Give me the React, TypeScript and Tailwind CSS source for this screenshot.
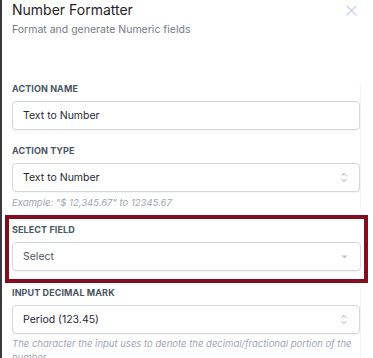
import React from "react";

const font = { fontFamily: "Inter, 'Noto Sans', sans-serif" };

function Label({ children }: { children: React.ReactNode }) {
  return (
    <div className="text-[9px] leading-[12px] font-bold tracking-[0.1px] text-[#4b5563] uppercase">
      {children}
    </div>
  );
}

function Chevrons() {
  return (
    <svg width="6" height="11" viewBox="0 0 6 11" fill="none" stroke="#9ca3af" strokeWidth="1" strokeLinecap="round" strokeLinejoin="round">
      <path d="M1 3.5 L3 1.5 L5 3.5" />
      <path d="M1 7.5 L3 9.5 L5 7.5" />
    </svg>
  );
}

function Caret() {
  return (
    <svg width="7" height="4" viewBox="0 0 7 4">
      <path d="M0.5 0.5 L6.5 0.5 L3.5 3.5 Z" fill="#c0c4cc" />
    </svg>
  );
}

function Field({ text, right, textColor = "text-[#1f2937]" }: { text: string; right?: React.ReactNode; textColor?: string }) {
  return (
    <div className="h-[29px] rounded-[4px] border border-[#d4d7dc] bg-white shadow-[0_1px_1px_rgba(0,0,0,0.04)] flex items-center pl-[10px] pr-[12px]">
      <span className={`flex-1 text-[10.5px] leading-[16px] ${textColor}`}>{text}</span>
      {right}
    </div>
  );
}

export default function App() {
  return (
    <div className="w-[373px] h-[358px] overflow-hidden flex bg-white" style={font}>
      <div className="w-[2px] bg-[#3a3a3a] shrink-0" />
      <div className="flex-1 flex flex-col">
        <div className="relative pl-[10px]">
          <div className="text-[14px] leading-[20px] text-[#1f2328]">Number Formatter</div>
          <div className="mt-[2px] text-[10.5px] leading-[16px] text-[#757b85]">Format and generate Numeric fields</div>
          <svg className="absolute left-[344px] top-[5px]" width="11" height="11" viewBox="0 0 11 11" stroke="#c9d0f7" strokeWidth="1.3" strokeLinecap="round">
            <path d="M1 1 L10 10 M10 1 L1 10" />
          </svg>
        </div>
        <div className="mt-[18px] h-px bg-[#e5e7eb]" />
        <div className="pl-[10px] pr-[12px]">
          <div className="mt-[27px] flex flex-col border-r border-[#f3f4f6] rounded-[4px]">
            <Label>Action Name</Label>
            <div className="mt-[6px]">
              <Field text="Text to Number" />
            </div>
            <div className="mt-[15px]">
              <Label>Action Type</Label>
            </div>
            <div className="mt-[6px]">
              <Field text="Text to Number" right={<Chevrons />} />
            </div>
            <div className="mt-[4px] text-[9.5px] leading-[14px] italic text-[#a0a6b0]">
              Example: "$ 12,345.67" to 12345.67
            </div>
          </div>
          <div className="mt-[5px] -mx-[7px] border-4 border-[#850d1f] px-[3px] pt-[5px] pb-[8px]">
            <Label>Select Field</Label>
            <div className="mt-[6px]">
              <Field text="Select" textColor="text-[#50555c]" right={<Caret />} />
            </div>
          </div>
          <div className="mt-[4px] border-r border-[#f3f4f6]">
            <Label>Input Decimal Mark</Label>
            <div className="mt-[6px]">
              <Field text="Period (123.45)" right={<Chevrons />} />
            </div>
            <div className="mt-[3px] text-[9.5px] leading-[14px] italic text-[#a0a6b0]">
              The character the input uses to denote the decimal/fractional portion of the number.
            </div>
          </div>
        </div>
      </div>
    </div>
  );
}
